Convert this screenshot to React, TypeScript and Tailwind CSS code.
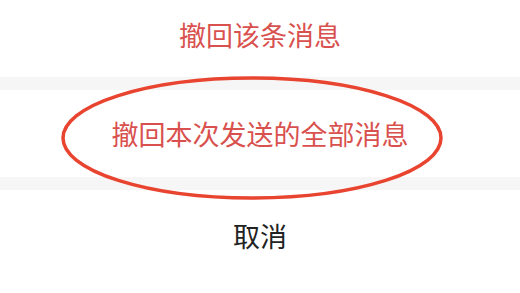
export default function App() {
  return (
    <div
      className="relative w-[520px] h-[293px] bg-white overflow-hidden flex flex-col"
      style={{ fontFamily: '"Noto Sans CJK SC", "Noto Sans", sans-serif' }}
    >
      <div className="h-[77px] flex items-center justify-center pb-2">
        <span className="text-[27px] leading-none text-[#d9514e]">撤回该条消息</span>
      </div>
      <div className="h-[13px] bg-[#f6f6f6]" />
      <div className="h-[87px] flex items-center justify-center">
        <span className="text-[27px] leading-none text-[#d9514e]">撤回本次发送的全部消息</span>
      </div>
      <div className="h-[13px] bg-[#f6f6f6]" />
      <div className="h-[90px] flex items-center justify-center">
        <span className="text-[27px] leading-none text-[#222222]">取消</span>
      </div>
      <div className="flex-1" />

      {/* red annotation circle */}
      <svg
        className="absolute left-[60px] top-[75px] pointer-events-none"
        width="384"
        height="126"
        viewBox="0 0 384 126"
      >
        <ellipse
          cx="192"
          cy="63"
          rx="189"
          ry="60"
          fill="none"
          stroke="#e8442f"
          strokeWidth="3.5"
        />
      </svg>
    </div>
  );
}
